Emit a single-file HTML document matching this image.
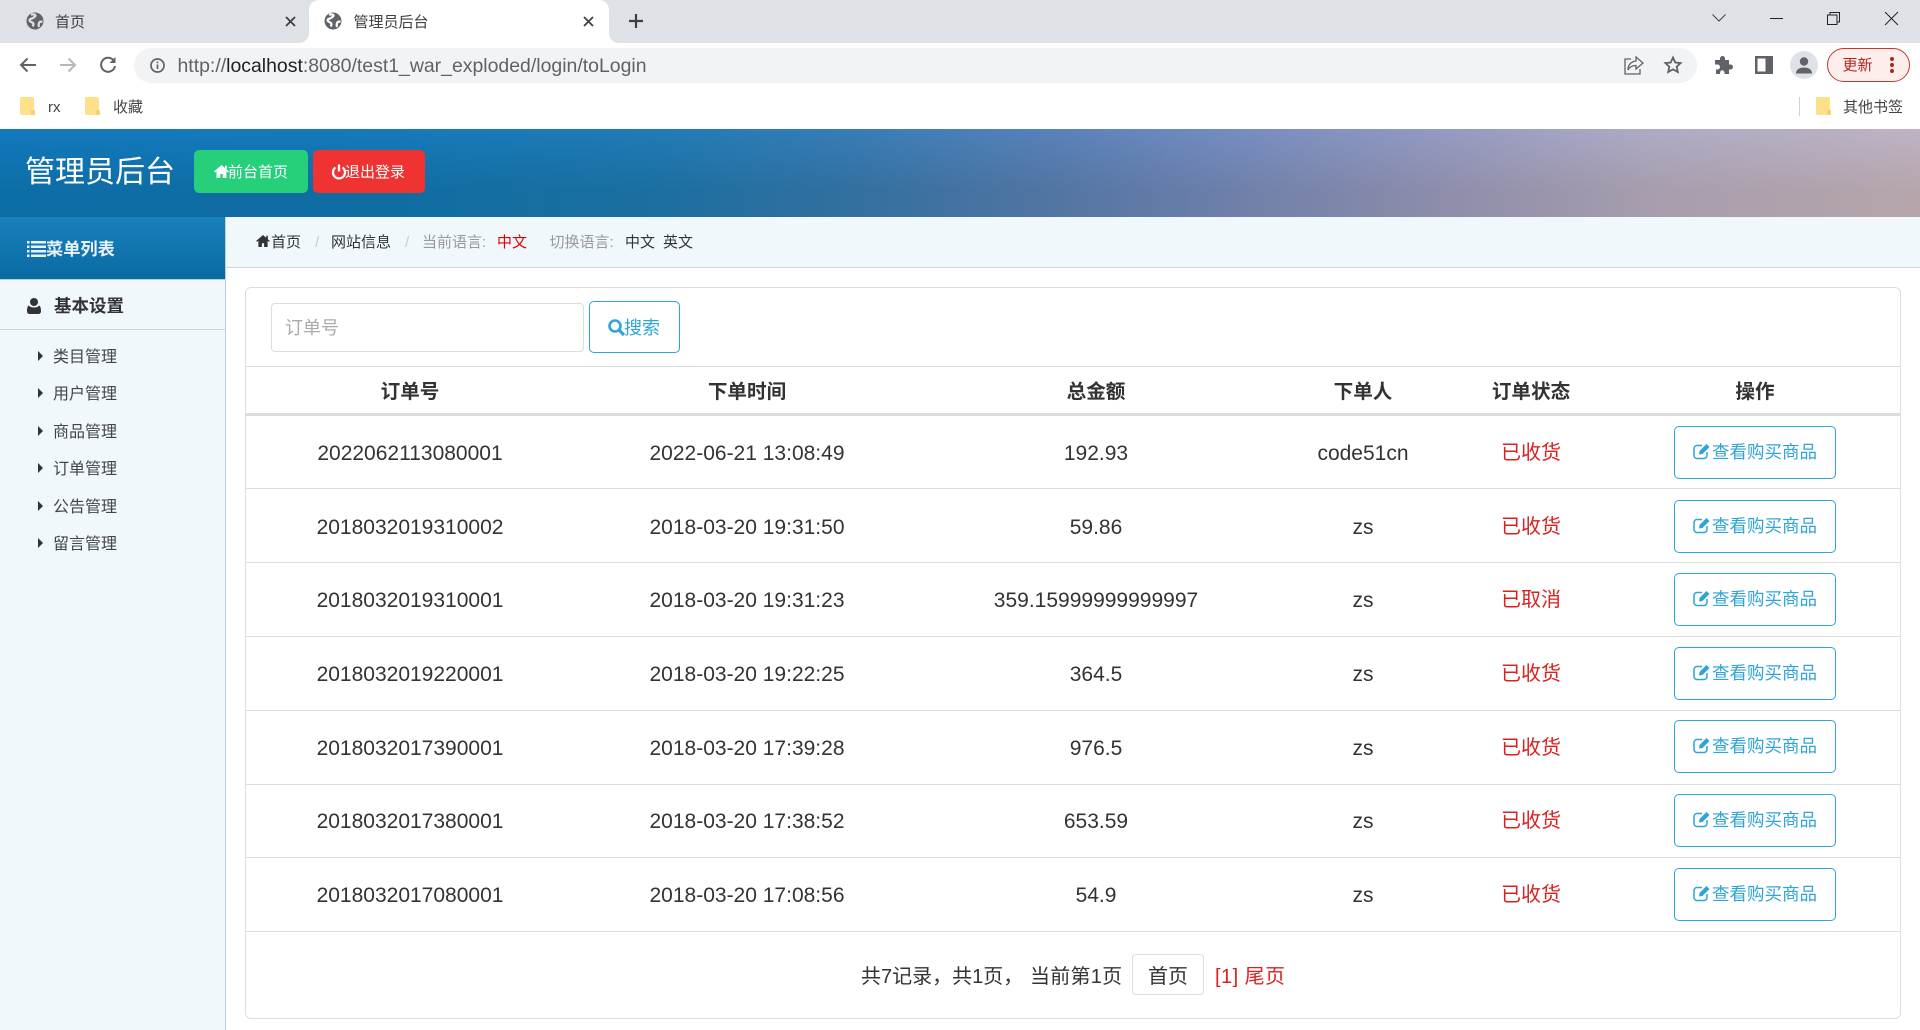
<!DOCTYPE html>
<html lang="zh-CN">
<head>
<meta charset="utf-8">
<title>管理员后台</title>
<style>
*{box-sizing:border-box;margin:0;padding:0}
html,body{width:1920px;height:1030px;overflow:hidden;background:#fff}
body{position:relative;font-family:"Liberation Sans","Noto Sans CJK SC",sans-serif;color:#333}
.a{position:absolute}
.t{position:absolute;white-space:nowrap;line-height:1}
svg{position:absolute;display:block;overflow:visible}
.tab{font-size:15px;color:#3c4043;letter-spacing:0}
.mi{position:absolute;left:53px;font-size:16px;color:#444;line-height:20px;white-space:nowrap}
.ar{position:absolute;left:38px;width:0;height:0;border-left:5px solid #333;border-top:5px solid transparent;border-bottom:5px solid transparent}
.bc{position:absolute;top:233px;font-size:15px;line-height:20px;white-space:nowrap;color:#333}
.row{position:absolute;left:246px;width:1654px;height:75px;border-bottom:1.5px solid #ddd;display:flex;font-size:21px;color:#333;line-height:77px;text-align:center}
.row span{display:block;flex:none}
.c1{width:328px}.c2{width:346px}.c3{width:352px}.c4{width:182px}.c5{width:154px;color:#db2020!important;font-size:20px}
.btn{position:absolute;left:1428px;top:11px;width:162px;height:52.5px;border:1.3px solid #2ea4d8;border-radius:5px;background:#fff;color:#2ea4d8;font-size:17.5px;line-height:50px;text-align:left;padding-left:37px;letter-spacing:0}
.th{position:absolute;top:377px;font-size:19.6px;font-weight:700;line-height:30px;text-align:center;color:#333}
</style>
</head>
<body>

<!-- browser chrome -->
<div class="a" style="left:0;top:0;width:1920px;height:43px;background:#dee1e6"></div>
<div class="a" style="left:309px;top:0;width:300px;height:43px;background:#fff;border-radius:10px 10px 0 0"></div>
<svg style="left:0;top:0" width="700" height="43" fill="none">
  <path d="M299 43a10 10 0 0 0 10-10v10zM609 33a10 10 0 0 0 10 10h-10z" fill="#fff"/>
</svg>
<svg style="left:26px;top:12px" width="18" height="18" viewBox="0 0 18 18"><circle cx="9" cy="9" r="8.500" fill="#5f6368"/><path d="M5 2.800c2-.8 4-.5 4.500.5s-1.500 2-2.500 2.700-3.500.8-3.500 2.300 2.500 1.700 3.500 2.700.2 2.500-.2 3.500M16.500 9.500c-1 0-3 .2-3.500 1.500s-.5 2.500 0 4" fill="none" stroke="#dee1e6" stroke-width="2.200"/></svg>
<div class="t tab" style="left:55px;top:15px">首页</div>
<svg style="left:285px;top:16px" width="11" height="11" stroke="#3c4043" stroke-width="1.800"><path d="M1 1l9 9M10 1l-9 9"/></svg>
<svg style="left:324px;top:12px" width="18" height="18" viewBox="0 0 18 18"><circle cx="9" cy="9" r="8.500" fill="#5f6368"/><path d="M5 2.800c2-.8 4-.5 4.500.5s-1.500 2-2.500 2.700-3.500.8-3.500 2.300 2.500 1.700 3.500 2.700.2 2.500-.2 3.500M16.500 9.500c-1 0-3 .2-3.500 1.500s-.5 2.500 0 4" fill="none" stroke="#fff" stroke-width="2.200"/></svg>
<div class="t tab" style="left:353.500px;top:15px">管理员后台</div>
<svg style="left:583px;top:16px" width="11" height="11" stroke="#3c4043" stroke-width="1.800"><path d="M1 1l9 9M10 1l-9 9"/></svg>
<svg style="left:628px;top:13px" width="16" height="16" stroke="#3c4043" stroke-width="2.200"><path d="M8 1v14M1 8h14"/></svg>

<svg style="left:1712px;top:14px" width="14" height="8" stroke="#3c4043" fill="none" stroke-width="1"><path d="M.5.500L7 7l6.500-6.500"/></svg>
<div class="a" style="left:1770px;top:18px;width:13px;height:1px;background:#222"></div>
<svg style="left:1827px;top:12px" width="13" height="13" stroke="#222" fill="none" stroke-width="1"><path d="M.5 3h9.500v9.500H.5zM3 3V.5h9.500V10H10"/></svg>
<svg style="left:1885px;top:12px" width="13" height="13" stroke="#222" stroke-width="1"><path d="M0 0l13 13M13 0L0 13"/></svg>

<!-- toolbar -->
<svg style="left:19px;top:57px" width="17" height="16" fill="none" stroke="#5f6368" stroke-width="2"><path d="M17 8H2M8.500 1.500L2 8l6.500 6.500"/></svg>
<svg style="left:60px;top:57px" width="17" height="16" fill="none" stroke="#b5b8bc" stroke-width="2"><path d="M0 8h15M8.500 1.500L15 8l-6.500 6.500"/></svg>
<svg style="left:99px;top:56px" width="18" height="18" fill="none" stroke="#5f6368" stroke-width="2"><path d="M15 5a7 7 0 1 0 1 5"/><path d="M16.500 1v6h-6" fill="#5f6368" stroke="none"/></svg>
<div class="a" style="left:134px;top:48px;width:1563px;height:35px;background:#f1f3f4;border-radius:18px"></div>
<svg style="left:150px;top:58px" width="15" height="15" fill="none" stroke="#5f6368" stroke-width="1.700"><circle cx="7.500" cy="7.500" r="6.500"/><path d="M7.500 6.500v4.500M7.500 3.500v1.800"/></svg>
<div class="t" style="left:177.500px;top:56px;font-size:19.450px;line-height:21px;color:#5f6368;white-space:nowrap">http://<span style="color:#202124">localhost</span>:8080/test1_war_exploded/login/toLogin</div>
<svg style="left:1624px;top:56px" width="20" height="19" fill="none" stroke="#5f6368" stroke-width="1.300"><path d="M7 3H1v15h15v-5"/><path d="M12 1l7 6-7 6V9.500C8 9.500 5.500 11 4 14c0-5 3-8.500 8-9z"/></svg>
<svg style="left:1664px;top:56px" width="18" height="18" fill="none" stroke="#5f6368" stroke-width="1.800"><path d="M9 1.500l2.300 5 5.300.6-3.900 3.600 1.100 5.300L9 13.300 4.200 16l1.100-5.300L1.400 7.100l5.300-.6z"/></svg>
<svg style="left:1714px;top:56px" width="18" height="18" fill="#5f6368"><path d="M6 2.500a2.500 2.500 0 0 1 5 0V4h4v4.500h1.500a2.500 2.500 0 0 1 0 5H15V18h-4.500v-1.500a2.200 2.200 0 0 0-4.400 0V18H2v-4.500h1.500a2.500 2.500 0 0 0 0-5H1V4h5z"/></svg>
<svg style="left:1755px;top:56px" width="18" height="18"><path d="M0 0h18v18H0z" fill="#5f6368"/><path d="M2.500 2.500h8v13h-8z" fill="#fff"/></svg>
<div class="a" style="left:1790px;top:51px;width:28px;height:28px;border-radius:50%;background:#dee1e6"></div>
<svg style="left:1795px;top:56px" width="18" height="18" fill="#5f6368"><circle cx="9" cy="5.500" r="4.200"/><path d="M1 17.500c0-4 3.500-6 8-6s8 2 8 6z"/></svg>
<div class="a" style="left:1827px;top:48px;width:83px;height:34px;border:1.500px solid #c0392f;border-radius:17px;background:#fdeeec"></div>
<div class="t" style="left:1842.500px;top:58px;font-size:15px;color:#b3261e">更新</div>
<div class="a" style="left:1890px;top:57px;width:4px;height:4px;border-radius:50%;background:#b3261e"></div>
<div class="a" style="left:1890px;top:63px;width:4px;height:4px;border-radius:50%;background:#b3261e"></div>
<div class="a" style="left:1890px;top:69px;width:4px;height:4px;border-radius:50%;background:#b3261e"></div>

<!-- bookmarks -->
<svg style="left:20px;top:97px" width="15" height="18"><path d="M1 0h11a2 2 0 0 1 2 2v16H2a2 2 0 0 1-2-2V1a1 1 0 0 1 1-1z" fill="#fde08a"/><rect x="11" y="13" width="4" height="5" rx="1.500" fill="#f4cf6c"/></svg>
<div class="t" style="left:48px;top:100px;font-size:15px;color:#444">rx</div>
<svg style="left:85px;top:97px" width="15" height="18"><path d="M1 0h11a2 2 0 0 1 2 2v16H2a2 2 0 0 1-2-2V1a1 1 0 0 1 1-1z" fill="#fde08a"/><rect x="11" y="13" width="4" height="5" rx="1.500" fill="#f4cf6c"/></svg>
<div class="t" style="left:113px;top:100px;font-size:15px;color:#444">收藏</div>
<div class="a" style="left:1799px;top:97px;width:1px;height:19px;background:#d0d2d5"></div>
<svg style="left:1816px;top:97px" width="15" height="18"><path d="M1 0h11a2 2 0 0 1 2 2v16H2a2 2 0 0 1-2-2V1a1 1 0 0 1 1-1z" fill="#fde08a"/><rect x="11" y="13" width="4" height="5" rx="1.500" fill="#f4cf6c"/></svg>
<div class="t" style="left:1843px;top:100px;font-size:15px;color:#444">其他书签</div>

<!-- header -->
<div class="a" style="left:0;top:129px;width:1920px;height:88px;background:linear-gradient(180deg,rgba(40,120,230,.13),rgba(0,30,60,.14) 70%,rgba(0,30,60,.14)),linear-gradient(90deg,#0f7ab8 0,#137ab3 400px,#1f7cb0 650px,#3a7db0 850px,#5f83b3 1050px,#7a8dbb 1200px,#a6a0bd 1450px,#c2b2c0 1650px,#d4bcbe 1920px)"></div>
<div class="t" style="left:25px;top:157px;font-size:30px;color:#fff;line-height:32px">管理员后台</div>
<div class="a" style="left:194px;top:150px;width:114px;height:43px;background:#26cf7a;border-radius:5px"></div>
<svg style="left:214px;top:165px" width="15" height="13" viewBox="0 0 15 13" fill="#fff"><path d="M7.500 0L0 6.500l1 1 1.500-1.300V13h3.800V9h2.400v4h3.800V6.200L14 7.500l1-1-2.200-1.900V.8H11v2.200z"/></svg>
<div class="t" style="left:228px;top:164px;font-size:15px;color:#fff;line-height:18px">前台首页</div>
<div class="a" style="left:313px;top:150px;width:112px;height:43px;background:#ef3333;border-radius:5px"></div>
<svg style="left:331.500px;top:164px" width="14" height="15" fill="none" stroke="#fff" stroke-width="2.300"><path d="M3.500 3.500a6 6 0 1 0 7 0"/><path d="M7 .5v7"/></svg>
<div class="t" style="left:345px;top:164px;font-size:15px;color:#fff;line-height:18px">退出登录</div>

<!-- sidebar -->
<div class="a" style="left:0;top:217px;width:226px;height:813px;background:#f1f8fc;border-right:1.500px solid #bccfdd"></div>
<div class="a" style="left:0;top:217px;width:225px;height:62px;background:linear-gradient(180deg,#1a80bd,#0a6ba3)"></div>
<div class="a" style="left:0;top:279px;width:225px;height:1px;background:#a9d4ea"></div>
<svg style="left:27px;top:241px" width="19" height="16" fill="#e8f3fa"><rect width="2.500" height="2.500"/><rect x="4" width="15" height="2.500"/><rect y="4.500" width="2.500" height="2.500"/><rect x="4" y="4.500" width="15" height="2.500"/><rect y="9" width="2.500" height="2.500"/><rect x="4" y="9" width="15" height="2.500"/><rect y="13.500" width="2.500" height="2.500"/><rect x="4" y="13.500" width="15" height="2.500"/></svg>
<div class="t" style="left:46px;top:239px;font-size:17.200px;font-weight:700;color:#e8f3fa;line-height:20px">菜单列表</div>
<svg style="left:27px;top:298px" width="14" height="16" fill="#333"><circle cx="7" cy="4" r="4"/><path d="M2 7.500c1 1.500 3 2 5 2s4-.5 5-2c1.500.5 2 3 2 5.500 0 2-1 3-3 3H3c-2 0-3-1-3-3 0-2.500.5-5 2-5.500z"/></svg>
<div class="t" style="left:54px;top:296px;font-size:17.500px;font-weight:700;color:#333;line-height:20px">基本设置</div>
<div class="a" style="left:0;top:329px;width:225px;height:1px;background:#c5d6e2"></div>

<div class="ar" style="top:351px"></div><div class="mi" style="top:348px">类目管理</div>
<div class="ar" style="top:388px"></div><div class="mi" style="top:385px">用户管理</div>
<div class="ar" style="top:426px"></div><div class="mi" style="top:423px">商品管理</div>
<div class="ar" style="top:463px"></div><div class="mi" style="top:460px">订单管理</div>
<div class="ar" style="top:501px"></div><div class="mi" style="top:498px">公告管理</div>
<div class="ar" style="top:538px"></div><div class="mi" style="top:535px">留言管理</div>

<!-- breadcrumb -->
<div class="a" style="left:226px;top:217px;width:1694px;height:51px;background:#f1f8fc;border-bottom:1.500px solid #c9d5e0"></div>
<svg style="left:256px;top:235px" width="14" height="12" viewBox="0 0 15 13" fill="#333"><path d="M7.500 0L0 6.500l1 1 1.500-1.300V13h3.800V9h2.400v4h3.800V6.200L14 7.500l1-1-2.200-1.900V.8H11v2.200z"/></svg>
<div class="bc" style="left:271px">首页</div>
<div class="bc" style="left:315px;color:#ccc">/</div>
<div class="bc" style="left:331px">网站信息</div>
<div class="bc" style="left:405px;color:#ccc">/</div>
<div class="bc" style="left:422px;color:#999">当前语言:</div>
<div class="bc" style="left:497px;color:#e00000">中文</div>
<div class="bc" style="left:549.500px;color:#999">切换语言:</div>
<div class="bc" style="left:625px">中文</div>
<div class="bc" style="left:663px">英文</div>

<!-- panel -->
<div class="a" style="left:245px;top:287px;width:1656px;height:732px;border:1.500px solid #ddd;border-radius:6px;background:#fff"></div>
<div class="a" style="left:271px;top:303px;width:313px;height:49px;border:1.500px solid #ddd;border-radius:4px;background:#fff"></div>
<div class="t" style="left:285px;top:318px;font-size:18px;color:#aaa;line-height:20px">订单号</div>
<div class="a" style="left:589px;top:301px;width:91px;height:52px;border:1.500px solid #2ea4d8;border-radius:5px;background:#fff"></div>
<svg style="left:608px;top:319px" width="17" height="17" fill="none" stroke="#2ea4d8" stroke-width="2.600"><circle cx="7" cy="7" r="5.500"/><path d="M11 11l5 5" stroke-width="3.200"/></svg>
<div class="t" style="left:624px;top:318px;font-size:18px;color:#2ea4d8;line-height:20px">搜索</div>

<!-- table -->
<div class="a" style="left:246px;top:366px;width:1654px;height:1px;background:#dcdcdc"></div>
<div class="a" style="left:246px;top:413px;width:1654px;height:3px;background:#ddd"></div>
<div class="th" style="left:246px;width:328px">订单号</div>
<div class="th" style="left:574px;width:346px">下单时间</div>
<div class="th" style="left:920px;width:352px">总金额</div>
<div class="th" style="left:1272px;width:182px">下单人</div>
<div class="th" style="left:1454px;width:154px">订单状态</div>
<div class="th" style="left:1608px;width:294px">操作</div>

<div class="row" style="top:415px;height:74px"><span class="c1">2022062113080001</span><span class="c2">2022-06-21 13:08:49</span><span class="c3">192.93</span><span class="c4">code51cn</span><span class="c5">已收货</span><div class="btn"><svg style="left:18px;top:16px" width="18" height="17" fill="none" stroke="#2ea4d8" stroke-width="1.500"><path d="M9 2.500H4a3 3 0 0 0-3 3v7a3 3 0 0 0 3 3h7a3 3 0 0 0 3-3V9"/><path d="M6.500 8L13.500 1l3 3-7 7-3.500.5z" fill="#2ea4d8" stroke="none"/></svg>查看购买商品</div></div>
<div class="row" style="top:489px;height:74px"><span class="c1">2018032019310002</span><span class="c2">2018-03-20 19:31:50</span><span class="c3">59.86</span><span class="c4">zs</span><span class="c5">已收货</span><div class="btn"><svg style="left:18px;top:16px" width="18" height="17" fill="none" stroke="#2ea4d8" stroke-width="1.500"><path d="M9 2.500H4a3 3 0 0 0-3 3v7a3 3 0 0 0 3 3h7a3 3 0 0 0 3-3V9"/><path d="M6.500 8L13.500 1l3 3-7 7-3.500.5z" fill="#2ea4d8" stroke="none"/></svg>查看购买商品</div></div>
<div class="row" style="top:562px"><span class="c1">2018032019310001</span><span class="c2">2018-03-20 19:31:23</span><span class="c3">359.15999999999997</span><span class="c4">zs</span><span class="c5">已取消</span><div class="btn"><svg style="left:18px;top:16px" width="18" height="17" fill="none" stroke="#2ea4d8" stroke-width="1.500"><path d="M9 2.500H4a3 3 0 0 0-3 3v7a3 3 0 0 0 3 3h7a3 3 0 0 0 3-3V9"/><path d="M6.500 8L13.500 1l3 3-7 7-3.500.5z" fill="#2ea4d8" stroke="none"/></svg>查看购买商品</div></div>
<div class="row" style="top:636px"><span class="c1">2018032019220001</span><span class="c2">2018-03-20 19:22:25</span><span class="c3">364.5</span><span class="c4">zs</span><span class="c5">已收货</span><div class="btn"><svg style="left:18px;top:16px" width="18" height="17" fill="none" stroke="#2ea4d8" stroke-width="1.500"><path d="M9 2.500H4a3 3 0 0 0-3 3v7a3 3 0 0 0 3 3h7a3 3 0 0 0 3-3V9"/><path d="M6.500 8L13.500 1l3 3-7 7-3.500.5z" fill="#2ea4d8" stroke="none"/></svg>查看购买商品</div></div>
<div class="row" style="top:710px"><span class="c1">2018032017390001</span><span class="c2">2018-03-20 17:39:28</span><span class="c3">976.5</span><span class="c4">zs</span><span class="c5">已收货</span><div class="btn" style="top:10px"><svg style="left:18px;top:16px" width="18" height="17" fill="none" stroke="#2ea4d8" stroke-width="1.500"><path d="M9 2.500H4a3 3 0 0 0-3 3v7a3 3 0 0 0 3 3h7a3 3 0 0 0 3-3V9"/><path d="M6.500 8L13.500 1l3 3-7 7-3.500.5z" fill="#2ea4d8" stroke="none"/></svg>查看购买商品</div></div>
<div class="row" style="top:783px"><span class="c1">2018032017380001</span><span class="c2">2018-03-20 17:38:52</span><span class="c3">653.59</span><span class="c4">zs</span><span class="c5">已收货</span><div class="btn"><svg style="left:18px;top:16px" width="18" height="17" fill="none" stroke="#2ea4d8" stroke-width="1.500"><path d="M9 2.500H4a3 3 0 0 0-3 3v7a3 3 0 0 0 3 3h7a3 3 0 0 0 3-3V9"/><path d="M6.500 8L13.500 1l3 3-7 7-3.500.5z" fill="#2ea4d8" stroke="none"/></svg>查看购买商品</div></div>
<div class="row" style="top:857px"><span class="c1">2018032017080001</span><span class="c2">2018-03-20 17:08:56</span><span class="c3">54.9</span><span class="c4">zs</span><span class="c5">已收货</span><div class="btn"><svg style="left:18px;top:16px" width="18" height="17" fill="none" stroke="#2ea4d8" stroke-width="1.500"><path d="M9 2.500H4a3 3 0 0 0-3 3v7a3 3 0 0 0 3 3h7a3 3 0 0 0 3-3V9"/><path d="M6.500 8L13.500 1l3 3-7 7-3.500.5z" fill="#2ea4d8" stroke="none"/></svg>查看购买商品</div></div>

<!-- pagination -->
<div class="t" style="left:861px;top:965px;font-size:20px;line-height:24px;color:#333">共7记录，共1页，</div>
<div class="t" style="left:1030px;top:965px;font-size:20px;line-height:24px;color:#333;letter-spacing:.25px">当前第1页</div>
<div class="a" style="left:1132px;top:954px;width:72px;height:41px;border:1.300px solid #ddd;border-radius:4px;background:#fff"></div>
<div class="t" style="left:1148px;top:965px;font-size:20px;line-height:24px;color:#333">首页</div>
<div class="t" style="left:1215px;top:965px;font-size:20px;line-height:24px;color:#e02020;letter-spacing:.45px">[1] 尾页</div>

</body>
</html>
